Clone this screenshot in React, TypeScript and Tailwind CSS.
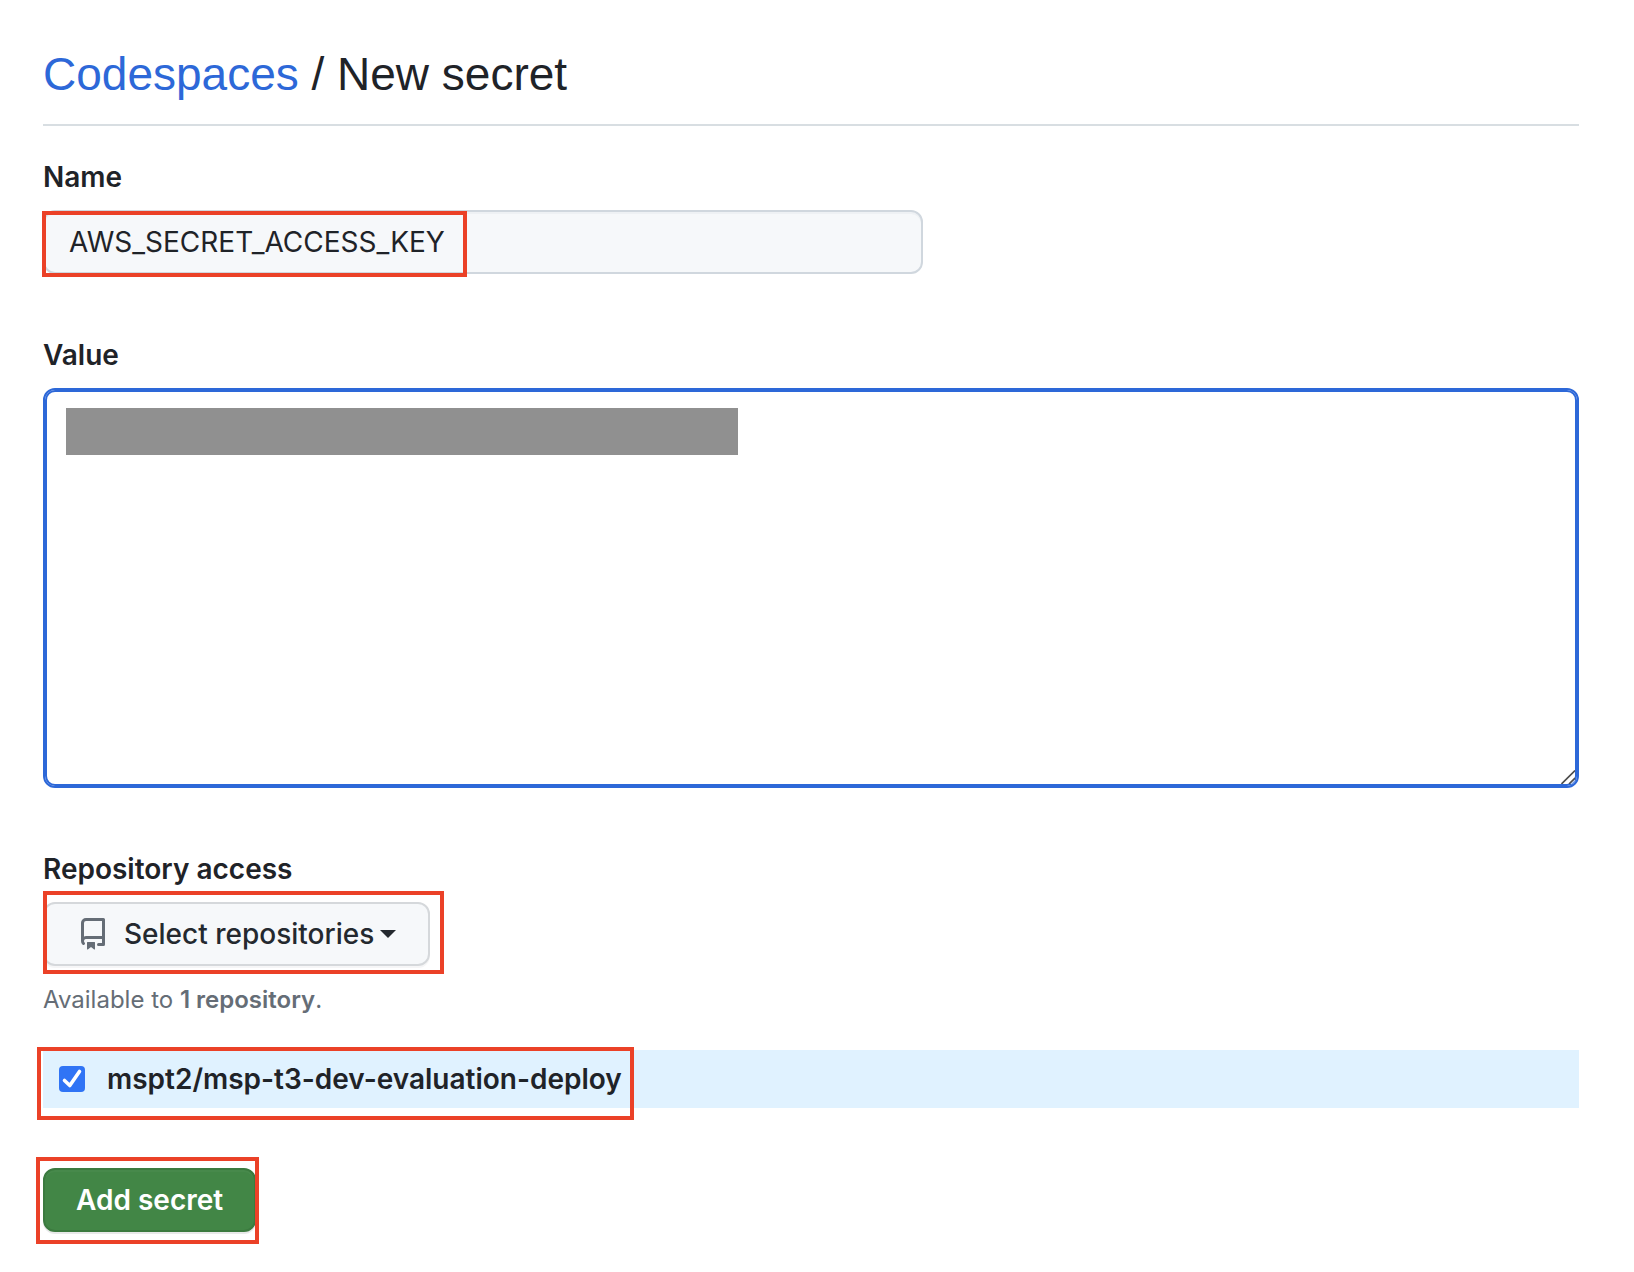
import React from "react";

function Highlight({ className }: { className: string }) {
  return (
    <span
      aria-hidden="true"
      className={`pointer-events-none absolute border-4 border-[#eb4127] ${className}`}
    />
  );
}

function RepoIcon() {
  return (
    <svg width="32" height="32" viewBox="0 0 16 16" fill="#656d76" aria-hidden="true">
      <path
        fillRule="evenodd"
        d="M2 2.5A2.5 2.5 0 0 1 4.5 0h8.75a.75.75 0 0 1 .75.75v12.5a.75.75 0 0 1-.75.75h-2.5a.75.75 0 0 1 0-1.5h1.75v-2h-8a1 1 0 0 0-.714 1.7.75.75 0 1 1-1.072 1.05A2.495 2.495 0 0 1 2 11.5Zm10.5-1h-8a1 1 0 0 0-1 1v6.708A2.486 2.486 0 0 1 4.5 9h8ZM5 12.25a.25.25 0 0 1 .25-.25h3.5a.25.25 0 0 1 .25.25v3.25a.25.25 0 0 1-.4.2l-1.45-1.087a.249.249 0 0 0-.3 0L5.4 15.7a.25.25 0 0 1-.4-.2Z"
      />
    </svg>
  );
}

export default function App() {
  return (
    <main className="bg-white pt-[38px] pr-[55px] pb-10 pl-[43px] font-['Inter',sans-serif] text-[28px] leading-[42px] text-[#1f2328]">
      <h1 className="border-b-2 border-[#d8dee2] pb-3.5 font-['Liberation_Sans',sans-serif] text-[46px] leading-[72px] font-normal">
        <a href="#codespaces" className="text-[#2d68d8]">
          Codespaces
        </a>{" "}
        / New secret
      </h1>

      <form className="flex flex-col" onSubmit={(e) => e.preventDefault()}>
        <label htmlFor="secret-name" className="mt-[30px] font-semibold">
          Name
        </label>
        <div className="relative mt-3 w-full max-w-[880px]">
          <input
            id="secret-name"
            type="text"
            defaultValue="AWS_SECRET_ACCESS_KEY"
            className="block h-16 w-full rounded-xl border-2 border-[#d0d7de] bg-[#f6f8fa] px-6 text-[28px] shadow-[inset_0_2px_0_rgba(208,215,222,0.2)] outline-none"
          />
          <Highlight className="top-px -left-px h-[66px] w-[425px]" />
        </div>

        <label htmlFor="secret-value" className="mt-[60px] font-semibold">
          Value
        </label>
        <div className="relative mt-3">
          <textarea
            id="secret-value"
            className="block h-[400px] w-full resize-none rounded-xl border-2 border-[#2d68d8] bg-white px-6 py-4 shadow-[inset_0_0_0_2px_#2d68d8] outline-none"
          />
          <span aria-hidden="true" className="absolute top-5 left-[23px] h-[47px] w-[672px] bg-[#909090]" />
          <svg
            className="absolute right-1 bottom-1"
            width="14"
            height="14"
            viewBox="0 0 14 14"
            fill="none"
            aria-hidden="true"
          >
            <path d="M9 14 14 9v2l-3 3Z" fill="#b9cdf3" />
            <path d="M0.5 14 14 0.5M8 14 14 8" stroke="#4d4d4d" strokeWidth="1.6" />
          </svg>
        </div>

        <h2 className="mt-[60px] font-semibold">Repository access</h2>
        <div className="relative mt-3 self-start">
          <button
            type="button"
            className="flex h-16 items-center rounded-xl border-2 border-[#d5d8db] bg-[#f6f8fa] pr-8 pl-8 font-medium text-[#24292f] shadow-[0_2px_0_rgba(31,35,40,0.04)]"
          >
            <RepoIcon />
            <span className="ml-[15px]">Select repositories</span>
            <span
              aria-hidden="true"
              className="ml-1.5 border-x-8 border-t-8 border-x-transparent border-t-[#24292f]"
            />
          </button>
          <Highlight className="-top-[11px] left-0 h-[83px] w-[401px]" />
        </div>

        <p className="mt-4 text-2xl leading-9 text-[#656d76]">
          Available to <strong className="font-semibold">1 repository</strong>.
        </p>

        <div className="relative mt-8 bg-[#e0f2ff] px-4 py-2">
          <label className="flex items-center font-semibold">
            <span className="relative size-[26px] shrink-0">
              <input
                type="checkbox"
                defaultChecked
                className="peer block size-[26px] appearance-none rounded-[4px] bg-white checked:bg-[#3074f5]"
              />
              <svg
                className="pointer-events-none absolute inset-0 hidden peer-checked:block"
                width="26"
                height="26"
                viewBox="0 0 26 26"
                fill="none"
                aria-hidden="true"
              >
                <path
                  d="M5.5 14.5 10.8 19.5 20.5 5.5"
                  stroke="#fff"
                  strokeWidth="3.6"
                  strokeLinecap="round"
                  strokeLinejoin="round"
                />
              </svg>
            </span>
            <span className="ml-[22px]">mspt2/msp-t3-dev-evaluation-deploy</span>
          </label>
          <Highlight className="-top-[3px] -left-1.5 h-[73px] w-[597px]" />
        </div>

        <div className="relative mt-[60px] self-start">
          <button
            type="submit"
            className="block h-16 rounded-xl border-2 border-[#3b7a3f] bg-[#428646] px-[31px] font-semibold text-white shadow-[0_2px_0_rgba(31,35,40,0.1),inset_0_2px_0_rgba(255,255,255,0.03)]"
          >
            Add secret
          </button>
          <Highlight className="-top-[11px] -left-[7px] h-[87px] w-[223px]" />
        </div>
      </form>
    </main>
  );
}
